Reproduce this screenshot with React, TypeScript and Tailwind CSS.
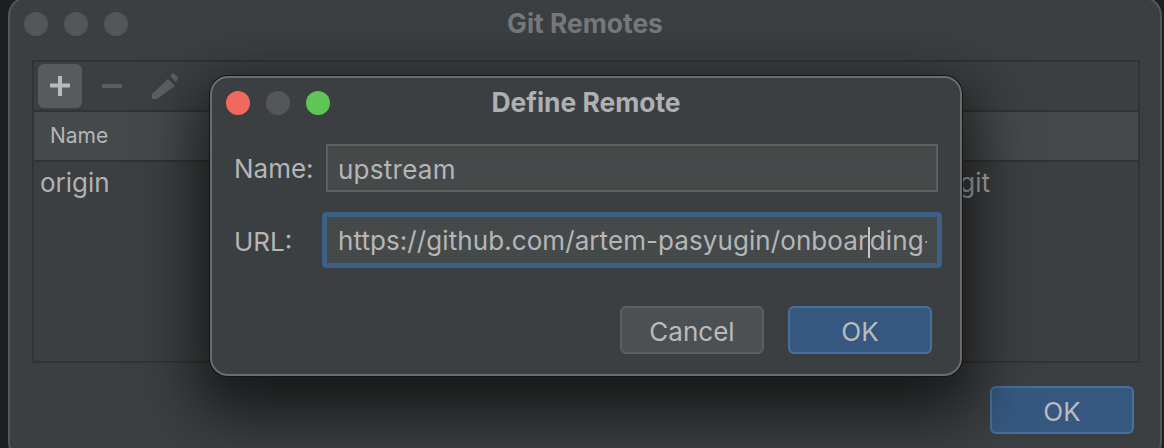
const F = "[font-family:Inter,'Noto_Sans',sans-serif]";

function Light({ color }: { color: string }) {
  return <span className="block w-6 h-6 rounded-full" style={{ backgroundColor: color }} />;
}

function Button({ label, primary }: { label: string; primary?: boolean }) {
  return (
    <button
      className={
        "w-36 h-12 rounded-md border-2 text-[26px] pt-[2px] text-[#b9bbbc] flex items-center justify-center " +
        (primary ? "bg-[#365880] border-[#46719c]" : "bg-[#4c5052] border-[#5c5f61]")
      }
    >
      {label}
    </button>
  );
}

export default function App() {
  return (
    <div className={"relative w-[1164px] h-[448px] overflow-hidden bg-[#1e1f20] " + F}>
      {/* Background window */}
      <div className="absolute left-2 -top-1 w-[1154px] h-[466px] rounded-[20px] bg-[#3c3f41] border-2 border-[#54575a] flex flex-col pb-[28px]">
        <div className="relative flex items-center h-[52px] pl-[14px] gap-4 shrink-0">
          <Light color="#54575a" />
          <Light color="#54575a" />
          <Light color="#54575a" />
          <span className="absolute left-0 right-0 text-center text-[26.400px] font-bold text-[#76797b]">Git Remotes</span>
        </div>
        <div className="ml-[22px] mr-[20px] mt-[10px] h-[303px] border-2 border-[#323334] flex flex-col shrink-0">
          <div className="h-12 flex items-center gap-2 pl-1 border-b-2 border-[#323334] shrink-0 box-content">
            <div className="w-11 h-11 rounded-md bg-[#575b5e] flex items-center justify-center">
              <svg width="22" height="22" viewBox="0 0 22 22">
                <path d="M9 1h4v7.500h8v4h-8V21H9v-8.500H1v-4h8z" fill="#b8babc" />
              </svg>
            </div>
            <div className="w-11 h-11 flex items-center justify-center">
              <span className="block w-5 h-1 bg-[#5b5e60]" />
            </div>
            <div className="w-11 h-11 flex items-center justify-center ml-px">
              <svg width="30" height="30" viewBox="0 0 30 30">
                <path d="M2 23 18 8l7 7L7 28H2z" fill="#5d6062" />
                <path d="M20 5l3.300-3.300 5 5L26 11z" fill="#5d6062" />
              </svg>
            </div>
          </div>
          <div className="h-12 bg-[#45494a] border-b-2 border-[#323334] flex items-center pl-4 text-[21px] text-[#b4b6b8] box-content shrink-0">
            Name
          </div>
          <div className="flex justify-between pl-[6px] pr-[148px] pt-1 text-[26px] leading-[34px] text-[#b0b2b4]">
            <span>origin</span>
            <span>https://github.com/artem-pasyugin/onboarding.git</span>
          </div>
        </div>
        <div className="flex justify-end mt-[23px] mr-[26px]">
          <Button label="OK" primary />
        </div>
      </div>

      {/* Foreground dialog */}
      <div className="absolute left-[210px] top-[76px] w-[752px] h-[300px] rounded-[18px] bg-[#3c3f41] border-2 border-[#6a6c6e] shadow-[0_0_0_1px_#151515,0_24px_60px_14px_rgba(0,0,0,0.62)] flex flex-col">
        <div className="relative flex items-center h-[50px] pl-[14px] gap-4 shrink-0">
          <Light color="#f1695e" />
          <Light color="#54575a" />
          <Light color="#5dc655" />
          <span className="absolute left-0 right-0 text-center text-[26.400px] font-bold text-[#aeb0b2]">Define Remote</span>
        </div>
        <div className="flex items-center h-12 mt-4 pl-[22px]">
          <span className="w-[92px] text-[26px] text-[#b4b6b8]">Name:</span>
          <div className="w-[612px] h-12 border-2 border-[#5e6060] bg-[#45494a] flex items-center pl-[10px] pt-[2px] text-[26px] tracking-[0.25px] text-[#b4b6b8]">
            upstream
          </div>
        </div>
        <div className="flex items-center h-14 mt-5 pl-[22px]">
          <span className="w-[88px] text-[26px] pt-[2px] text-[#b4b6b8]">URL:</span>
          <div className="w-[620px] h-14 border-[5px] border-[#3d6185] rounded bg-[#45494a] flex items-center pl-[11px] pr-[10px] text-[26px] tracking-[0.08px] text-[#b4b6b8] overflow-hidden whitespace-nowrap">
            <span className="overflow-hidden">
              https://github.com/artem-pasyugin/onboar
              <span className="inline-block w-0 h-[31px] border-l-2 border-[#c4c6c8] align-middle" />
              ding-git
            </span>
          </div>
        </div>
        <div className="flex justify-end gap-6 mt-[38px] mr-7">
          <Button label="Cancel" />
          <Button label="OK" primary />
        </div>
      </div>
    </div>
  );
}
